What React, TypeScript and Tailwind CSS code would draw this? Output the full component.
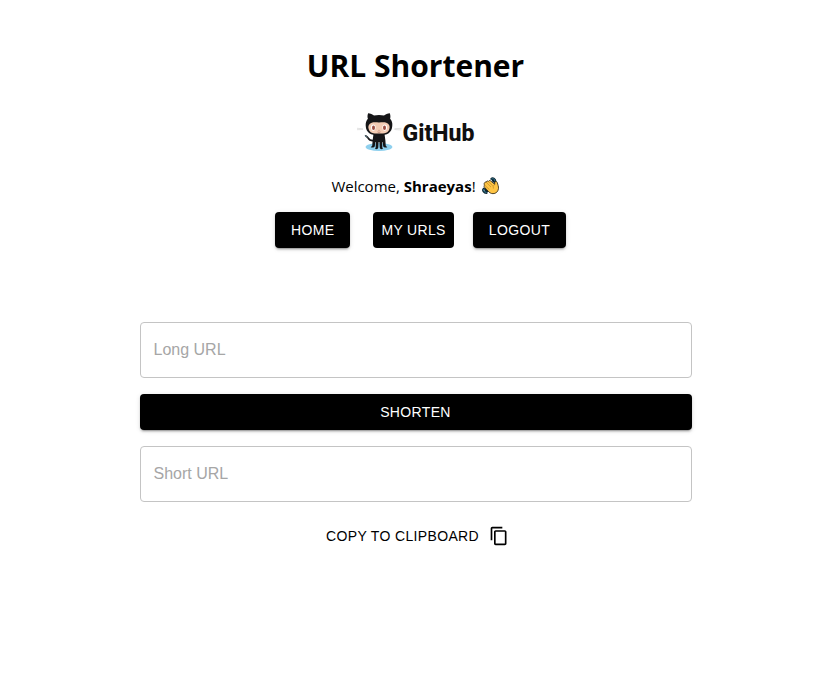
import { useState, type ReactNode } from "react";

const solid =
  "h-9 rounded-[4px] bg-black font-['Liberation_Sans',Arial,sans-serif] text-sm tracking-wide text-white uppercase";
const raised =
  "shadow-[0_3px_1px_-2px_rgba(0,0,0,0.2),0_2px_2px_0_rgba(0,0,0,0.14),0_1px_5px_0_rgba(0,0,0,0.12)]";

function Octocat() {
  return (
    <svg viewBox="1 0 46 40" className="h-10 w-[46px]" aria-hidden="true">
      <ellipse cx="23" cy="35" rx="13.4" ry="4" fill="#8fd0ee" />
      <path d="M1 16.300l6 .4M1 17.700l6-.2M38.500 16.700l7-.4M38.500 17.500l7 .5" stroke="#cfcfcf" strokeWidth=".6" fill="none" />
      <path d="M18.500 28.500c-4 .6-5.400-.6-6.300-2.400-.7-1.300-1.800-1.600-2.500-2.300" stroke="#1a1a1c" strokeWidth="1.700" fill="none" strokeLinecap="round" />
      <path d="M8.800 23.500l2.600 2" stroke="#7aa6b5" strokeWidth=".8" />
      <path d="M17.500 22h11l.9 6.500.3 4.800c.1 1.300 1.400 1.200 1.500 2-2 .7-4.200 0-4.100-1.800l-.3-3.200h-.6l.1 4.800c0 1.200.7 1.300.5 2-1.900.3-3.100-.3-3.100-1.900l-.2-4.900h-1l-.2 4.900c0 1.600-1.200 2.200-3.100 1.900-.1-.8.500-.9.500-2l.1-4.800h-.6l-.3 3.200c.1 1.800-2.100 2.500-4.100 1.800.1-.8 1.400-.7 1.500-2l.3-4.800z" fill="#151517" />
      <path d="M12.100 1.200c2.200 0 4.500 1.300 5.900 2.300a22 22 0 0 1 10 0c1.400-1 3.700-2.300 5.800-2.300.7 1.900.8 3.700.3 5.500 1.800 2 2.500 4.200 2.200 7-.5 6.900-4.800 9.600-13.300 9.600s-12.900-2.700-13.300-9.600c-.2-2.800.5-5 2.200-7-.6-1.800-.5-3.600.2-5.500z" fill="#151517" />
      <path d="M15.700 10.700c2.500-.9 4.800-.3 7.300-.3s4.800-.6 7.300.3c2.900 1.100 3.900 3.500 3.100 6-1 4.200-4.400 4.900-10.400 4.900s-9.400-.7-10.400-4.900c-.8-2.500.2-4.900 3.100-6z" fill="#f3cbb3" />
      <ellipse cx="17.300" cy="15.600" rx="2.300" ry="3.100" fill="#fff" />
      <ellipse cx="28.700" cy="15.600" rx="2.300" ry="3.100" fill="#fff" />
      <ellipse cx="17.500" cy="15.700" rx="1.500" ry="2.200" fill="#9c4d42" />
      <ellipse cx="28.500" cy="15.700" rx="1.500" ry="2.200" fill="#9c4d42" />
      <path d="M21.500 19.900q1.500 1 3 0" stroke="#9c5b4c" strokeWidth=".6" fill="none" />
      <circle cx="23" cy="18.300" r=".5" fill="#b0705c" />
    </svg>
  );
}

function WavingHand() {
  return (
    <svg viewBox="0 0 20 20" className="size-[18px]" role="img" aria-label="Waving hand">
      <path d="M10.500 2.200q1-1.200 2.600-.4t1.700 2.900M12 4q1.600.2 2 2M2 13q-1.300 1.300-.2 3t3.200 1.700M4 13.500q0 1.700 1.800 2.200" stroke="#0c2430" strokeWidth="2.400" fill="none" strokeLinecap="round" />
      <path d="M10.700 2.200q1-.8 2.200-.2t1.500 2.400M2 13.500q-.9 1 0 2.200t2.600 1.400" stroke="#377c97" strokeWidth="1.100" fill="none" strokeLinecap="round" />
      <path d="M3 6.200c.5-.8 1.200-.7 1.700-.4.300-1.500 1.500-1.800 2.400-.8.600-1.300 1.800-1.500 2.700-.5l4.300 3.700c.2-.8-.2-2 .2-2.700.8-1.200 2.400-.5 2.700.8.500 2 1.600 4.200 1.300 6.700-.5 3.500-3 5.600-6.100 5.500-2.500 0-4-1.300-5.500-2.900l-4-4.300c-.8-1-.5-1.900.2-2.300-.8-1-.6-2.100.1-2.800z" fill="#ffc545" stroke="#2a2110" strokeWidth=".9" />
      <path d="M4.700 5.900l5 5M7 5l4.700 4.600M3 9l4.900 4.700M14 8.200q-2.500 1.600-1.500 4.300" stroke="#b98220" strokeWidth=".7" fill="none" strokeLinecap="round" />
    </svg>
  );
}

function CopyIcon() {
  return (
    <svg viewBox="0 0 24 24" className="size-5" fill="currentColor" aria-hidden="true">
      <path d="M16 1H4c-1.100 0-2 .9-2 2v14h2V3h12V1zm3 4H8c-1.100 0-2 .9-2 2v14c0 1.100.9 2 2 2h11c1.100 0 2-.9 2-2V7c0-1.100-.9-2-2-2zm0 16H8V7h11v14z" />
    </svg>
  );
}

function Field({ id, label, value, onChange }: { id: string; label: string; value: string; onChange?: (v: string) => void }) {
  return (
    <div className="relative font-['Liberation_Sans',Arial,sans-serif] text-base">
      <input
        id={id}
        type="text"
        value={value}
        readOnly={!onChange}
        onChange={(e) => onChange?.(e.target.value)}
        className="block h-14 w-full rounded-[4px] border border-[#c4c4c4] px-[13px] text-black"
      />
      {value === "" && (
        <label htmlFor={id} className="pointer-events-none absolute top-4 left-3.5 leading-6 text-[#a6a6a6]">{label}</label>
      )}
    </div>
  );
}

function NavButton({ className, children }: { className: string; children: ReactNode }) {
  return <button type="button" className={`${solid} ${className}`}>{children}</button>;
}

export default function App() {
  const [longUrl, setLongUrl] = useState("");
  return (
    <main className="min-h-screen bg-white font-['Open_Sans','Noto_Sans',sans-serif] text-black">
      <header className="flex flex-col items-center pt-11">
        <h1 className="text-[30px] leading-[44px] font-bold">URL Shortener</h1>
        <div className="mt-6 flex h-10 items-center">
          <Octocat />
          <span className="pt-1 font-[Roboto,sans-serif] text-[23px] leading-9 font-extrabold text-[#101010]">GitHub</span>
        </div>
        <p className="mt-5 flex h-7 items-center gap-1.5 text-[15px]">
          <span>Welcome, <strong className="font-bold">Shraeyas</strong>!</span>
          <WavingHand />
        </p>
        <nav className="mt-3 flex gap-[19px] pl-2.5">
          <NavButton className={`mr-1 px-4 ${raised}`}>Home</NavButton>
          <NavButton className="px-2">My URLs</NavButton>
          <NavButton className={`px-4 ${raised}`}>Logout</NavButton>
        </nav>
      </header>
      <form className="mx-auto mt-[74px] flex max-w-[600px] flex-col gap-4 px-6" onSubmit={(e) => e.preventDefault()}>
        <Field id="long-url" label="Long URL" value={longUrl} onChange={setLongUrl} />
        <button type="submit" className={`${solid} ${raised} w-full`}>Shorten</button>
        <Field id="short-url" label="Short URL" value="" />
        <button type="button" className="flex h-9 items-center gap-2.5 self-center pr-2 pl-3 font-['Liberation_Sans',Arial,sans-serif] text-sm tracking-wide uppercase">
          Copy to clipboard
          <CopyIcon />
        </button>
      </form>
    </main>
  );
}
